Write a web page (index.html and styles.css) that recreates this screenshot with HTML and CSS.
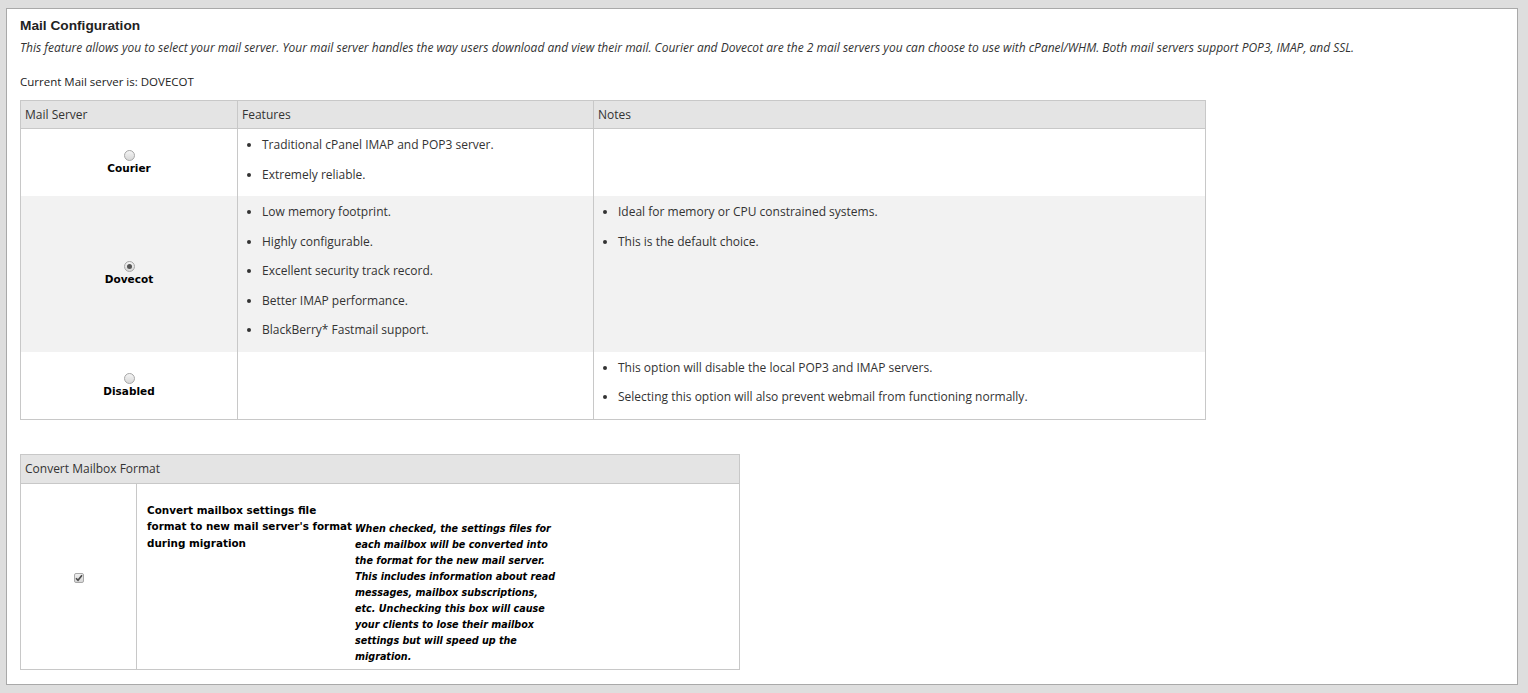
FILE: index.html
```html
<!DOCTYPE html>
<html>
<head>
<meta charset="utf-8">
<link rel="stylesheet" href="styles.css">
</head>
<body>
<div class="panel">
  <h1 class="title">Mail Configuration</h1>
  <p class="intro">This feature allows you to select your mail server. Your mail server handles the way users download and view their mail. Courier and Dovecot are the 2 mail servers you can choose to use with cPanel/WHM. Both mail servers support POP3, IMAP, and SSL.</p>
  <p class="current">Current Mail server is: DOVECOT</p>

  <table class="grid servers">
    <thead>
      <tr>
        <th class="c1">Mail Server</th>
        <th class="c2">Features</th>
        <th class="c3">Notes</th>
      </tr>
    </thead>
    <tbody>
      <tr>
        <td class="choice">
          <span class="radio"></span>
          <span class="choice-label">Courier</span>
        </td>
        <td>
          <ul class="list">
            <li>Traditional cPanel IMAP and POP3 server.</li>
            <li>Extremely reliable.</li>
          </ul>
        </td>
        <td></td>
      </tr>
      <tr class="alt">
        <td class="choice">
          <span class="radio checked"></span>
          <span class="choice-label">Dovecot</span>
        </td>
        <td>
          <ul class="list">
            <li>Low memory footprint.</li>
            <li>Highly configurable.</li>
            <li>Excellent security track record.</li>
            <li>Better IMAP performance.</li>
            <li>BlackBerry* Fastmail support.</li>
          </ul>
        </td>
        <td>
          <ul class="list">
            <li>Ideal for memory or CPU constrained systems.</li>
            <li>This is the default choice.</li>
          </ul>
        </td>
      </tr>
      <tr>
        <td class="choice">
          <span class="radio"></span>
          <span class="choice-label">Disabled</span>
        </td>
        <td></td>
        <td>
          <ul class="list">
            <li>This option will disable the local POP3 and IMAP servers.</li>
            <li>Selecting this option will also prevent webmail from functioning normally.</li>
          </ul>
        </td>
      </tr>
    </tbody>
  </table>

  <table class="grid convert">
    <thead>
      <tr><th colspan="2">Convert Mailbox Format</th></tr>
    </thead>
    <tbody>
      <tr>
        <td class="check-cell">
          <span class="checkbox"><svg width="8" height="8" viewBox="0 0 8 8"><path d="M1 4.2 L3 6.3 L7 1.2" fill="none" stroke="#4a4a4a" stroke-width="1.6"/></svg></span>
        </td>
        <td class="option-cell">
          <div class="option">
            <div class="option-label">Convert mailbox settings file format to new mail server's format during migration</div>
            <div class="option-desc">When checked, the settings files for each mailbox will be converted into the format for the new mail server. This includes information about read messages, mailbox subscriptions, etc. Unchecking this box will cause your clients to lose their mailbox settings but will speed up the migration.</div>
          </div>
        </td>
      </tr>
    </tbody>
  </table>
</div>
</body>
</html>
```

FILE: styles.css
```css
html, body {
  margin: 0;
  padding: 0;
  background: #dedede;
}

body {
  font-family: "Open Sans", "DejaVu Sans", sans-serif;
  font-size: 12px;
  color: #333;
}

.panel {
  box-sizing: border-box;
  margin: 8px 0 0 6px;
  width: 1512px;
  height: 677px;
  background: #fff;
  border: 1px solid #a9a9a9;
  padding: 8px 13px 0 13px;
}

.title {
  margin: 0;
  font-family: "Liberation Sans", Arial, sans-serif;
  font-size: 13.7px;
  font-weight: bold;
  line-height: 17px;
  color: #222;
}

.intro {
  margin: 6px 0 0;
  font-style: italic;
  line-height: 16px;
  color: #333;
}

.current {
  margin: 18px 0 0;
  line-height: 16px;
  font-size: 11.5px;
  color: #222;
}

.grid {
  border-collapse: collapse;
  border: 1px solid #c8c8c8;
}

.grid th {
  background: #e4e4e4;
  font-weight: normal;
  text-align: left;
  height: 26px;
  padding: 0 4px 1px;
  border: 1px solid #c8c8c8;
  color: #333;
}

.grid td {
  border-left: 1px solid #c8c8c8;
  border-right: 1px solid #c8c8c8;
  vertical-align: top;
  padding: 0;
}

.servers {
  margin-top: 10px;
  width: 1186px;
}

.servers .c1 { width: 208px; }
.servers .c2 { width: 347px; }

.servers tr.alt td {
  background: #f2f2f2;
}

.choice {
  text-align: center;
  vertical-align: middle !important;
}

.radio {
  display: block;
  box-sizing: border-box;
  width: 11px;
  height: 11px;
  margin: 0 auto 0;
  border-radius: 50%;
  border: 1px solid #a8a8a8;
  background: linear-gradient(#f4f4f4, #d8d8d8);
  position: relative;
}

.radio.checked::after {
  content: "";
  position: absolute;
  left: 2px;
  top: 2px;
  width: 5px;
  height: 5px;
  border-radius: 50%;
  background: #555;
}

.choice-label {
  display: block;
  font-family: "DejaVu Sans", sans-serif;
  font-weight: bold;
  font-size: 10.5px;
  line-height: 14px;
  color: #000;
}

.list {
  margin: 0;
  padding: 8px 0 0 24px;
  list-style: disc;
}

.list li {
  line-height: 16px;
  margin-bottom: 13.5px;
}

.convert {
  margin-top: 34px;
  width: 720px;
}

.convert th {
  height: 27px;
}

.check-cell {
  width: 115px;
  text-align: center;
  vertical-align: middle !important;
  border-bottom: 1px solid #c8c8c8;
}

.checkbox {
  display: inline-flex;
  align-items: center;
  justify-content: center;
  box-sizing: border-box;
  width: 10px;
  height: 10px;
  border: 1px solid #a8a8a8;
  border-radius: 2px;
  background: linear-gradient(#f0f0f0, #d6d6d6);
  vertical-align: middle;
}

.option-cell {
  padding: 18px 10px 4px !important;
  border-bottom: 1px solid #c8c8c8;
}

.option {
  display: flex;
  align-items: flex-start;
}

.option-label {
  width: 208px;
  flex: none;
  font-family: "DejaVu Sans", sans-serif;
  font-weight: bold;
  font-size: 10.4px;
  line-height: 16.5px;
  color: #000;
}

.option-desc {
  width: 205px;
  flex: none;
  padding-top: 19px;
  font-family: "DejaVu Sans", sans-serif;
  font-weight: bold;
  font-style: italic;
  font-size: 9.6px;
  line-height: 16.1px;
  color: #000;
}
```
